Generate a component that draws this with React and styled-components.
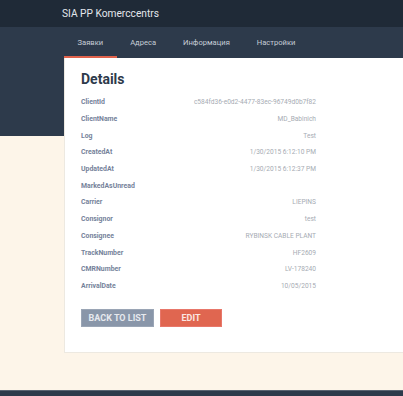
import React from "react";
import styled, { createGlobalStyle } from "styled-components";

const details = [
  ["ClientId", "c584fd36-e0d2-4477-83ec-96749d0b7f82"],
  ["ClientName", "MD_Babinich"],
  ["Log", "Test"],
  ["CreatedAt", "1/30/2015 6:12:10 PM"],
  ["UpdatedAt", "1/30/2015 6:12:37 PM"],
  ["MarkedAsUnread", ""],
  ["Carrier", "LIEPINS"],
  ["Consignor", "test"],
  ["Consignee", "RYBINSK CABLE PLANT"],
  ["TrackNumber", "HF2609"],
  ["CMRNumber", "LV-178240"],
  ["ArrivalDate", "10/05/2015"],
];

const tabs = ["Заявки", "Адреса", "Информация", "Настройки"];

function App() {
  return (
    <>
      <GlobalStyle />
      <Page>
        <TopBar>SIA PP Komerccentrs</TopBar>
        <Band>
          <Nav>
            {tabs.map((t, i) => (
              <Tab key={t} active={i === 0}>
                {t}
              </Tab>
            ))}
          </Nav>
        </Band>
        <Main>
          <Card>
            <Title>Details</Title>
            <List>
              {details.map(([k, v]) => (
                <Row key={k}>
                  <Label>{k}</Label>
                  <Value>{v}</Value>
                </Row>
              ))}
            </List>
            <Actions>
              <Button variant="back">Back to list</Button>
              <Button variant="edit">Edit</Button>
            </Actions>
          </Card>
        </Main>
        <Footer />
      </Page>
    </>
  );
}

export default App;

const GlobalStyle = createGlobalStyle`
  html, body {
    margin: 0;
    padding: 0;
    background: #fdf5e9;
    overflow: hidden;
  }
  body {
    font-family: Roboto, "Liberation Sans", sans-serif;
  }
`;

const Page = styled.div`
  width: 403px;
  height: 396px;
  display: flex;
  flex-direction: column;
  overflow: hidden;
`;

const TopBar = styled.div`
  height: 27px;
  background: #1f2a37;
  color: #e3e7ec;
  font-size: 10.2px;
  display: flex;
  align-items: center;
  padding-left: 62px;
  flex-shrink: 0;
`;

const Band = styled.div`
  height: 109px;
  background: #2d3a4b;
  flex-shrink: 0;
`;

const Nav = styled.nav`
  height: 31px;
  display: flex;
  padding-left: 64px;
`;

const Tab = styled.div`
  padding: 0 13.5px;
  font-size: 7.6px;
  color: #c5ccd6;
  display: flex;
  align-items: center;
  box-sizing: border-box;
  height: 31px;
  border-bottom: 2px solid ${(p) => (p.active ? "#e0624c" : "transparent")};
  padding-top: 1px;
`;

const Main = styled.main`
  margin-top: -78px;
  padding-left: 64px;
  flex-shrink: 0;
`;

const Card = styled.section`
  width: 360px;
  height: 295px;
  box-sizing: border-box;
  background: #ffffff;
  border: 1px solid #ede9e1;
  border-top: none;
  padding: 12px 0 0 16px;
`;

const Title = styled.h2`
  margin: 0;
  font-size: 14px;
  line-height: 18px;
  font-weight: 700;
  color: #2e3a4b;
`;

const List = styled.div`
  width: 235px;
  margin-top: 6px;
  display: flex;
  flex-direction: column;
`;

const Row = styled.div`
  height: 16.7px;
  display: flex;
  align-items: center;
  justify-content: space-between;
`;

const Label = styled.span`
  font-size: 6.9px;
  font-weight: 700;
  color: #75829a;
`;

const Value = styled.span`
  font-size: 6.6px;
  color: #a6abb3;
`;

const Actions = styled.div`
  display: flex;
  gap: 6px;
  margin-top: 15px;
`;

const Button = styled.button`
  height: 18px;
  width: ${(p) => (p.variant === "edit" ? "62px" : "73px")};
  border: 1px solid ${(p) => (p.variant === "edit" ? "#e8776a" : "#9aa5b5")};
  background: ${(p) => (p.variant === "edit" ? "#e06650" : "#8996a9")};
  color: ${(p) => (p.variant === "edit" ? "#fbe6e1" : "#e6e9ee")};
  font-family: Roboto, "Liberation Sans", sans-serif;
  font-size: 9px;
  font-weight: 700;
  text-transform: uppercase;
  padding: 0;
  cursor: pointer;
`;

const Footer = styled.footer`
  margin-top: 37px;
  height: 10px;
  background: #2d3a4b;
  border-top: 1px solid #5a6472;
  flex-shrink: 0;
`;
